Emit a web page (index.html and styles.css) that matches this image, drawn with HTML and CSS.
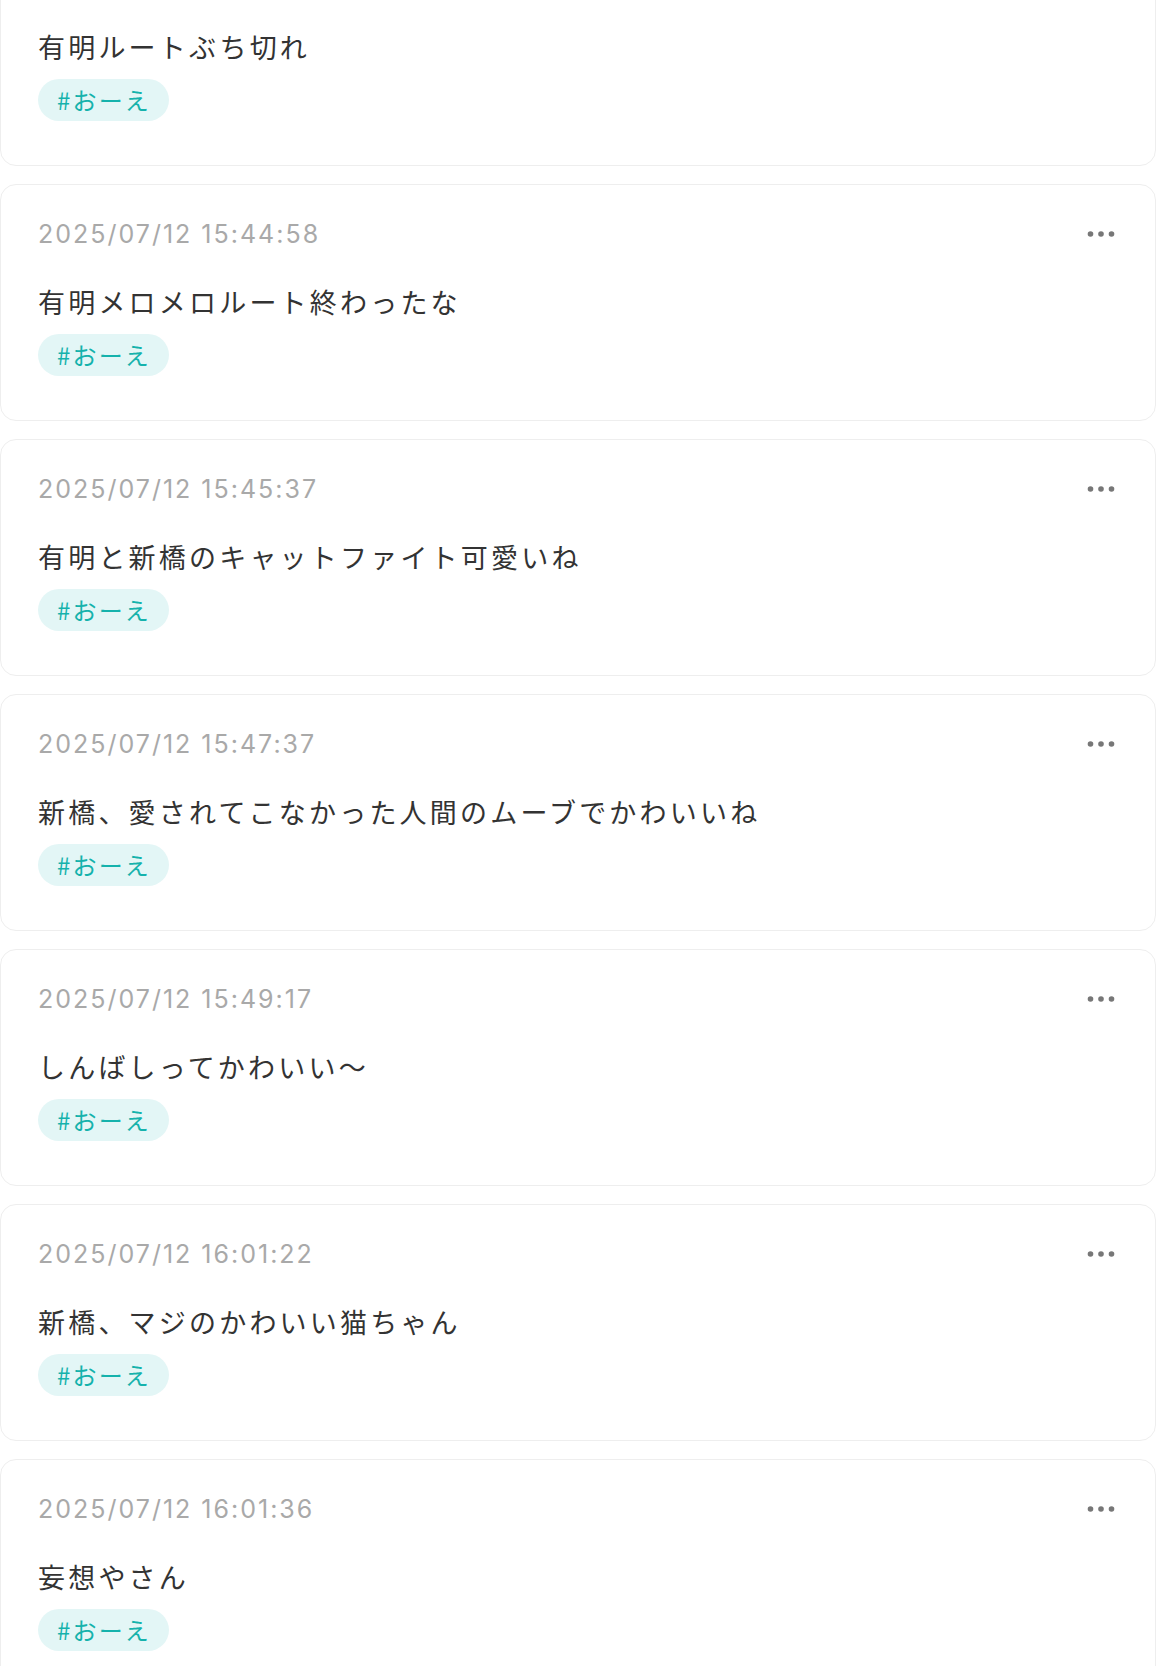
FILE: index.html
```html
<!DOCTYPE html>
<html lang="ja">
<head>
<meta charset="utf-8">
<title>ログ</title>
<link rel="stylesheet" href="styles.css">
</head>
<body>
<main class="list">
  <article class="card">
    <div class="head"><span class="time">2025/07/12 15:43:10</span><button class="more" aria-label="メニュー"><svg width="28" height="8" viewBox="0 0 28 8"><circle cx="3.5" cy="4" r="2.8"/><circle cx="14" cy="4" r="2.8"/><circle cx="24.5" cy="4" r="2.8"/></svg></button></div>
    <p class="body">有明ルートぶち切れ</p>
    <div class="tags"><span class="tag">#おーえ</span></div>
  </article>
  <article class="card">
    <div class="head"><span class="time">2025/07/12 15:44:58</span><button class="more" aria-label="メニュー"><svg width="28" height="8" viewBox="0 0 28 8"><circle cx="3.5" cy="4" r="2.8"/><circle cx="14" cy="4" r="2.8"/><circle cx="24.5" cy="4" r="2.8"/></svg></button></div>
    <p class="body">有明メロメロルート終わったな</p>
    <div class="tags"><span class="tag">#おーえ</span></div>
  </article>
  <article class="card">
    <div class="head"><span class="time">2025/07/12 15:45:37</span><button class="more" aria-label="メニュー"><svg width="28" height="8" viewBox="0 0 28 8"><circle cx="3.5" cy="4" r="2.8"/><circle cx="14" cy="4" r="2.8"/><circle cx="24.5" cy="4" r="2.8"/></svg></button></div>
    <p class="body">有明と新橋のキャットファイト可愛いね</p>
    <div class="tags"><span class="tag">#おーえ</span></div>
  </article>
  <article class="card">
    <div class="head"><span class="time">2025/07/12 15:47:37</span><button class="more" aria-label="メニュー"><svg width="28" height="8" viewBox="0 0 28 8"><circle cx="3.5" cy="4" r="2.8"/><circle cx="14" cy="4" r="2.8"/><circle cx="24.5" cy="4" r="2.8"/></svg></button></div>
    <p class="body">新橋、愛されてこなかった人間のムーブでかわいいね</p>
    <div class="tags"><span class="tag">#おーえ</span></div>
  </article>
  <article class="card">
    <div class="head"><span class="time">2025/07/12 15:49:17</span><button class="more" aria-label="メニュー"><svg width="28" height="8" viewBox="0 0 28 8"><circle cx="3.5" cy="4" r="2.8"/><circle cx="14" cy="4" r="2.8"/><circle cx="24.5" cy="4" r="2.8"/></svg></button></div>
    <p class="body">しんばしってかわいい〜</p>
    <div class="tags"><span class="tag">#おーえ</span></div>
  </article>
  <article class="card">
    <div class="head"><span class="time">2025/07/12 16:01:22</span><button class="more" aria-label="メニュー"><svg width="28" height="8" viewBox="0 0 28 8"><circle cx="3.5" cy="4" r="2.8"/><circle cx="14" cy="4" r="2.8"/><circle cx="24.5" cy="4" r="2.8"/></svg></button></div>
    <p class="body">新橋、マジのかわいい猫ちゃん</p>
    <div class="tags"><span class="tag">#おーえ</span></div>
  </article>
  <article class="card">
    <div class="head"><span class="time">2025/07/12 16:01:36</span><button class="more" aria-label="メニュー"><svg width="28" height="8" viewBox="0 0 28 8"><circle cx="3.5" cy="4" r="2.8"/><circle cx="14" cy="4" r="2.8"/><circle cx="24.5" cy="4" r="2.8"/></svg></button></div>
    <p class="body">妄想やさん</p>
    <div class="tags"><span class="tag">#おーえ</span></div>
  </article>
</main>
</body>
</html>
```

FILE: styles.css
```css
html, body {
  margin: 0;
  padding: 0;
  background: #ffffff;
}

body {
  font-family: "Noto Sans CJK JP", "Noto Sans", sans-serif;
  color: #333333;
  overflow: hidden;
}

.list {
  display: flex;
  flex-direction: column;
  gap: 18px;
  margin-top: -71px;
}

.card {
  background: #ffffff;
  border: 1px solid #eeeeee;
  border-radius: 16px;
  padding: 31px 36px 44px 37px;
}

.head {
  display: flex;
  align-items: center;
  justify-content: space-between;
}

.time {
  font-family: Inter, "Noto Sans", sans-serif;
  font-size: 25px;
  line-height: 36px;
  letter-spacing: 0.08em;
  color: #a9a9a9;
}

.more {
  border: 0;
  background: none;
  padding: 0;
  margin-right: 4px;
  display: flex;
  align-items: center;
  cursor: pointer;
}

.more svg {
  fill: #777777;
  display: block;
}

.body {
  margin: 30px 0 0;
  font-size: 27px;
  line-height: 40px;
  letter-spacing: 3.2px;
  color: #333333;
}

.tags {
  display: flex;
  margin-top: 12px;
}

.tag {
  display: inline-block;
  background: #e3f6f6;
  color: #15b2ac;
  font-size: 24px;
  line-height: 42px;
  letter-spacing: 0.09em;
  padding: 0 18px 0 19px;
  border-radius: 21px;
}
```
